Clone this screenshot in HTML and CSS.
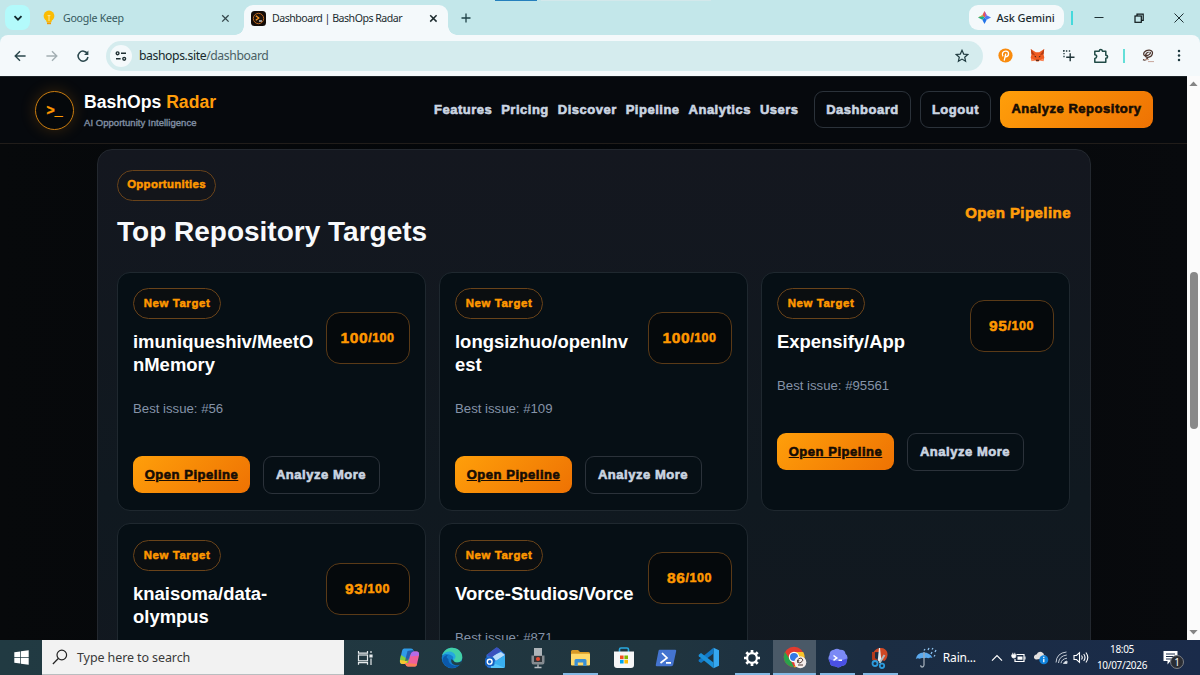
FILE: index.html
```html
<!DOCTYPE html>
<html lang="en">
<head>
    <meta charset="UTF-8">
    <meta name="viewport" content="width=device-width, initial-scale=1.0">
    <title>Dashboard | BashOps Radar</title>
    <link rel="stylesheet" href="styles.css">
</head>
<body>
    <div class="tab-strip">
        <button class="tab-search"><svg width="10" height="10" viewBox="0 0 10 10"><path d="M1.5 3.2 5 6.700l3.500-3.500" fill="none" stroke="#12282c" stroke-width="1.8"/></svg></button>
        <div class="tab">
            <svg width="12" height="16" viewBox="0 0 12 16"><circle cx="6" cy="6" r="5.4" fill="#fbbc04"/><path d="M3.4 9h5.2v3.2H3.4z" fill="#fbbc04"/><path d="M4 12.4h4v1.8H4z" fill="#f29900"/><path d="M6 6v5M4.6 5.6h2.8" stroke="#fff2c2" stroke-width=".8"/></svg>
            <span class="tab-title">Google Keep</span>
            <svg class="tab-close" width="9" height="9" viewBox="0 0 9 9"><path d="m1.2 1.2 6.4 6.4m0-6.4L1.2 7.6" stroke="#35484c" stroke-width="1.3"/></svg>
        </div>
        <div class="tab active">
            <svg width="15" height="15" viewBox="0 0 15 15"><rect width="15" height="15" rx="3.5" fill="#120c08"/><circle cx="7.5" cy="7.5" r="5.2" fill="#1d140d" stroke="#b9651f" stroke-width="1"/><path d="m4.8 4.8 3 2.3-3 2.2" fill="none" stroke="#ff9b21" stroke-width="1.2"/><path d="M8 10h3" stroke="#eee" stroke-width="1.2"/></svg>
            <span class="tab-title">Dashboard | BashOps Radar</span>
            <svg class="tab-close" width="9" height="9" viewBox="0 0 9 9"><path d="m1.2 1.2 6.4 6.4m0-6.4L1.2 7.6" stroke="#1e2c2f" stroke-width="1.5"/></svg>
        </div>
        <svg class="new-tab" width="10" height="10" viewBox="0 0 10 10"><path d="M5 .5v9M.5 5h9" stroke="#1f4147" stroke-width="1.3"/></svg>
        <div class="top-marks"><i></i><i></i></div>
        <button class="gemini">
            <svg width="13" height="13" viewBox="0 0 13 13"><path d="M6.500 0 8.700 4.300 6.500 6.500 4.300 4.300z" fill="#f0574c"/><path d="M8.700 4.300 13 6.500 8.700 8.700 6.500 6.500z" fill="#4a7bf0"/><path d="M8.700 8.700 6.500 13 4.300 8.700l2.200-2.200z" fill="#2374e8"/><path d="M4.300 8.700 0 6.500l4.300-2.200 2.200 2.200z" fill="#1baf88"/><path d="m0 6.500 4.300-2.200 1 1z" fill="#f3b52d"/><path d="m6.500 0 2.200 4.300-1.500 1.500z" fill="#9a58d8"/></svg>
            Ask Gemini
        </button>
        <span class="strip-divider"></span>
        <div class="window-buttons">
            <svg width="12" height="12" viewBox="0 0 12 12"><path d="M1.500 5.500h9" stroke="#1e3034"/></svg>
            <svg width="12" height="12" viewBox="0 0 12 12" fill="none" stroke="#0d1719" stroke-width="1.2"><rect x="2" y="4" width="6.3" height="6.3"/><path d="M4 4V2.2h6.2v6.2H8.3"/></svg>
            <svg width="12" height="12" viewBox="0 0 12 12"><path d="m1.500 1.500 9 9m0-9-9 9" stroke="#1e3034"/></svg>
        </div>
    </div>

    <div class="toolbar">
        <div class="nav-buttons">
            <svg width="14" height="14" viewBox="0 0 14 14" fill="none" stroke="#2a474c" stroke-width="1.4"><path d="M12.600 7H2.400M7 2.200 2.200 7 7 11.800"/></svg>
            <svg width="14" height="14" viewBox="0 0 14 14" fill="none" stroke="#a3afb3" stroke-width="1.4"><path d="M1.400 7h10.200M7 2.200 11.800 7 7 11.800"/></svg>
            <svg width="14" height="14" viewBox="0 0 14 14"><path d="M11.400 4.600A5 5 0 1 0 12 8" fill="none" stroke="#2a474c" stroke-width="1.5"/><path d="M12.400 1.600v4.300H8.100z" fill="#2a474c"/></svg>
        </div>
        <div class="omnibox">
            <span class="site-info"><svg width="12" height="12" viewBox="0 0 12 12" fill="none" stroke="#1f2f32" stroke-width="1.4"><circle cx="2.6" cy="3.3" r="1.4"/><path d="M6 3.300h5M1 8.800h4.600"/><circle cx="9.2" cy="8.8" r="1.4"/></svg></span>
            <span class="url">bashops.site<span>/dashboard</span></span>
            <svg class="star" width="14" height="14" viewBox="0 0 14 14"><path d="m7 1.300 1.700 3.800 4.100.4-3.100 2.700.9 4L7 10.100l-3.600 2.100.9-4L1.200 5.500l4.100-.4z" fill="none" stroke="#1e3a3f" stroke-width="1.2"/></svg>
        </div>
        <div class="extensions">
            <svg width="15" height="15" viewBox="0 0 15 15"><circle cx="7.5" cy="7.5" r="7.1" fill="#f98b0d"/><path d="M6.200 12.600 7.800 5.600M5 8.400C3.200 5.400 5.200 3 8 3.200c3.400.2 3.600 5.300-.6 5.600" fill="none" stroke="#fff" stroke-width="1.3"/></svg>
            <svg width="15" height="15" viewBox="0 0 15 15"><path d="m.8 1 5 3.200h3.400l5-3.200-.7 5.200.8 3.400-1 3.600-3.400-1-1.400 1.200h-2l-1.400-1.200-3.400 1-1-3.600.8-3.400z" fill="#ef5b20"/><path d="m.8 1 4.300 6.200-3.600-1zM14.200 1 9.900 7.200l3.600-1z" fill="#b23c14"/><path d="m4 7.800 2 .4.2 1.500zM11 7.800l-2 .4-.2 1.500zM6 11.800h3v1H6z" fill="#33201a"/><path d="m1.500 10.200 3.600 2-3.400.8zM13.500 10.200l-3.600 2 3.400.8z" fill="#ff8d5d"/></svg>
            <svg width="13" height="13" viewBox="0 0 13 13"><path d="M1 2h8M2 1v8" fill="none" stroke="#21363a" stroke-width="1.3" stroke-dasharray="1.4 1.5"/><path d="M8.200 4.200v8M4.200 8.200h8.300" stroke="#21363a" stroke-width="1.4"/></svg>
            <svg width="16" height="16" viewBox="0 0 16 16"><path d="M1.800 3.200h4.400Q6.400 1.400 7.800 1.400t1.600 1.800h3.400v4q1.800 0 1.800 1.500t-1.800 1.500v4h-11v-3.800q1.900-.2 1.900-1.900t-1.900-1.800z" fill="none" stroke="#204b46" stroke-width="1.5" stroke-linejoin="round"/></svg>
            <span class="ext-divider"></span>
            <svg width="14" height="14" viewBox="0 0 14 14" fill="none" stroke="#4b342c"><path d="M4 7C.8 5 4 .9 8.300 1.100 13.500 1.400 11.800 8 7 8.300 3 8.600 4.200 4 7.600 3.200m1 0C11 3.800 7 7.400 5 6.200M7 8.400Q5 12 2 10.600" stroke-width="1.3"/><path d="M3 10.600h5M7 12.600h6" stroke="#c7a69b"/></svg>
            <svg width="4" height="13" viewBox="0 0 4 13" fill="#1f3b40"><circle cx="2" cy="2" r="1.25"/><circle cx="2" cy="6.5" r="1.25"/><circle cx="2" cy="11" r="1.25"/></svg>
        </div>
    </div>

    <div class="viewport">
        <div class="page">
            <header class="site-header">
                <div class="logo">&gt;_</div>
                <div class="brand">
                    <strong>BashOps <span>Radar</span></strong>
                    <small>AI Opportunity Intelligence</small>
                </div>
                <nav class="site-nav">
                    <a>Features</a>
                    <a>Pricing</a>
                    <a>Discover</a>
                    <a>Pipeline</a>
                    <a>Analytics</a>
                    <a>Users</a>
                </nav>
                <a class="btn btn-outline btn-dashboard">Dashboard</a>
                <a class="btn btn-outline btn-logout">Logout</a>
                <a class="btn btn-primary btn-analyze">Analyze Repository</a>
            </header>

            <section class="panel">
                <div class="panel-head">
                    <div>
                        <span class="chip chip-wide">Opportunities</span>
                        <h2>Top Repository Targets</h2>
                    </div>
                    <a class="panel-link">Open Pipeline</a>
                </div>
                <div class="cards">
                    <article class="card">
                        <div class="card-head">
                            <div class="card-title">
                                <span class="chip">New Target</span>
                                <h3>imuniqueshiv/MeetOnMemory</h3>
                            </div>
                            <div class="score">100<small>/100</small></div>
                        </div>
                        <p>Best issue: #56</p>
                        <div class="card-actions">
                            <a class="btn btn-primary">Open Pipeline</a>
                            <a class="btn btn-outline">Analyze More</a>
                        </div>
                    </article>
                    <article class="card">
                        <div class="card-head">
                            <div class="card-title">
                                <span class="chip">New Target</span>
                                <h3>longsizhuo/openInvest</h3>
                            </div>
                            <div class="score">100<small>/100</small></div>
                        </div>
                        <p>Best issue: #109</p>
                        <div class="card-actions">
                            <a class="btn btn-primary">Open Pipeline</a>
                            <a class="btn btn-outline">Analyze More</a>
                        </div>
                    </article>
                    <article class="card">
                        <div class="card-head">
                            <div class="card-title">
                                <span class="chip">New Target</span>
                                <h3>Expensify/App</h3>
                            </div>
                            <div class="score">95<small>/100</small></div>
                        </div>
                        <p>Best issue: #95561</p>
                        <div class="card-actions">
                            <a class="btn btn-primary">Open Pipeline</a>
                            <a class="btn btn-outline">Analyze More</a>
                        </div>
                    </article>
                    <article class="card">
                        <div class="card-head">
                            <div class="card-title">
                                <span class="chip">New Target</span>
                                <h3>knaisoma/data-olympus</h3>
                            </div>
                            <div class="score">93<small>/100</small></div>
                        </div>
                    </article>
                    <article class="card">
                        <div class="card-head">
                            <div class="card-title">
                                <span class="chip">New Target</span>
                                <h3>Vorce-Studios/Vorce</h3>
                            </div>
                            <div class="score">86<small>/100</small></div>
                        </div>
                        <p>Best issue: #871</p>
                    </article>
                </div>
            </section>
        </div>
        <div class="scrollbar">
            <svg width="9" height="6" viewBox="0 0 9 6"><path d="M4.500.6 8.600 5H.4z" fill="#858585"/></svg>
            <div class="track"><div class="thumb"></div></div>
            <svg width="9" height="6" viewBox="0 0 9 6"><path d="M4.500 5.400.4 1h8.200z" fill="#858585"/></svg>
        </div>
    </div>

    <footer class="taskbar">
        <div class="start"><svg width="15" height="15" viewBox="0 0 15 15" fill="#fff"><path d="M.3 2.300 6.200 1.400v5.700H.3zM6.900 1.300 14.700.2v6.900H6.900zM.3 7.800h5.900v5.800L.3 12.800zM6.900 7.800h7.800v7L6.900 13.700z"/></svg></div>
        <div class="search">
            <svg width="16" height="16" viewBox="0 0 16 16" fill="none" stroke="#222" stroke-width="1.2"><circle cx="9.8" cy="6" r="4.8"/><path d="M6.300 9.500.9 15"/></svg>
            Type here to search
        </div>
        <div class="app task-view"><svg width="16" height="16" viewBox="0 0 16 16" fill="none" stroke="#e5eaec" stroke-width="1.2"><path d="M1.500 1v2.200h9V1M1.500 14.800v-2.200h9v2.200"/><rect x="1.5" y="5" width="9" height="5.8"/><path d="M14 1v2M14 8.500V15"/><path d="M13 5h2v2h-2z" fill="#fff"/></svg></div>
        <div class="app"><svg width="21" height="21" viewBox="0 0 21 21"><path d="M5 1.500h7q2 0 2.500 2l.5 2h-3L9.500 15q-.5 2-2.500 2H3.500Q.5 17 1 13L3 4q.5-2.500 2-2.500z" fill="#2f9be8"/><path d="M2 8 .9 13q-.4 4 2.600 4H7q2 0 2.500-2l.6-2z" fill="#7fd03c"/><path d="M1 13q-.3 4 2.500 4H7l1-3z" fill="#f6c730"/><path d="M16 19.500H9q-2 0-2.500-2L6 16h3l2.500-9q.5-2.500 3-2.500h3q3 0 2.500 4L18 17q-.5 2.500-2 2.500z" fill="#f0609a"/><path d="M20 8.500q.5-4-2.500-4h-3q-2 0-2.500 2l-.8 3z" fill="#b46be8"/><path d="m7 16-.8.5Q7 19.500 9 19.500h7q1.500 0 2-2.500z" fill="#fb8155"/><path d="m8.500 4 5.500-1 .5 1.500q-2 .3-2.700 2L9 13.500 6 14z" fill="#1c3d91" opacity=".65"/></svg></div>
        <div class="app"><svg width="22" height="22" viewBox="0 0 22 22"><circle cx="11" cy="11" r="10.3" fill="#147dce"/><path d="M1 8.500C3 3 7 .7 11 .7c6 0 10.300 4.300 10.300 9.300 0 3.800-2.800 5.600-5.400 5.600-3 0-4-1.400-3.200-2.500C14.200 9.500 11.500 6.800 8 6.500 5 6.300 2.500 7 1 8.500z" fill="#42d0a6"/><path d="M1 8.500C5 3 13 3 14.500 9c.4 2.600-2 3.200-1.700 5-1-.8-1.200-2.300-.5-3.800C11 7 3.500 5.500 1 8.500z" fill="#25a9df"/><path d="M7.400 12c-.4 5 5.400 8 11 6.300C13.500 23 4.500 21.500 2 15 .8 11.500 3.500 8 7 8q-3 2 .4 4z" fill="#0b59aa"/><path d="M12.800 14c1.500 2.200 5 1.900 7.200.6l1.500-.6-1.500 3-1.500 1C13 19.500 9 16 10.500 12z" fill="#20404a"/></svg></div>
        <div class="app"><svg width="22" height="22" viewBox="0 0 22 22"><path d="M2.500 8 12 .8q1-.5 2 .2L21 7v12q0 2-2 2H6q-3.500 0-3.500-3z" fill="#2a73d5"/><path d="m8 9 9-4 4 3-9 6z" fill="#b9dcfb"/><path d="M2.500 8 12 .8q1-.5 2 .2l3 2.500-9.500 7z" fill="#3c51bd"/><path d="M21 8 7 17v2.500L19 21q2 0 2-2z" fill="#39aff0"/><path d="m7 15 14 6H7z" fill="#55c5fa"/><rect x="1" y="10.500" width="9.5" height="8.5" rx="2" fill="#1460bf"/><circle cx="5.7" cy="14.7" r="2.4" fill="none" stroke="#fff" stroke-width="1.4"/></svg></div>
        <div class="app"><svg width="16" height="22" viewBox="0 0 16 22"><path d="M4 1h8v8H4z" fill="#aeb4b8"/><path d="M1.500 8.500h13V15q0 2.500-2 2.500h-9q-2 0-2-2.500z" fill="#858b90"/><path d="M4 9h8v6H4z" fill="#313539"/><circle cx="8" cy="12" r="2.1" fill="#e24b31"/><path d="M8 17.500V20M4.500 20.500h7" stroke="#b7bdc1" stroke-width="1.3"/></svg></div>
        <div class="app open"><svg width="21" height="18" viewBox="0 0 21 18"><path d="M1 2.500Q1 1 2.500 1H8l2 2h8.500Q20 3 20 4.500V16H1z" fill="#d99a26"/><rect x="1" y="4.8" width="19" height="11.7" rx="1" fill="#ffd96b"/><path d="M4.500 17v-5.500q0-1.500 1.500-1.500h9q1.500 0 1.500 1.500V17h-3.300v-3.500H7.800V17z" fill="#3b8fd3"/></svg></div>
        <div class="app"><svg width="22" height="22" viewBox="0 0 22 22"><path d="M6.500 5V2.500Q6.500 1 8 1h6q1.500 0 1.500 1.500V5" fill="none" stroke="#29a9df" stroke-width="1.6"/><path d="M1 4.500h20V18q0 3-3 3H4q-3 0-3-3z" fill="#f6f6f7"/><path d="M7 8.500h3.600v3.600H7z" fill="#f25022"/><path d="M11.400 8.500H15v3.600h-3.600z" fill="#7fba00"/><path d="M7 12.900h3.600v3.600H7z" fill="#00a4ef"/><path d="M11.400 12.900H15v3.600h-3.600z" fill="#ffb900"/></svg></div>
        <div class="app"><svg width="22" height="18" viewBox="0 0 22 18"><path d="M4.700.8H20q1.500 0 1.200 1.300l-3 13.700q-.3 1.400-1.800 1.400H2Q.4 17.200.8 15.700L3.500 2q.2-1.200 1.200-1.200z" fill="#4474d0"/><path d="m7 4 5 5-6.500 5M11 13.800h5" fill="none" stroke="#fff" stroke-width="1.7"/></svg></div>
        <div class="app"><svg width="22" height="22" viewBox="0 0 22 22"><path d="M15.500.8 21 3.300v15.400l-5.500 2.500z" fill="#35a7f0"/><path d="M15.500.8v5.700L3 16 .8 14.300q-.5-.8 0-1.500z" fill="#1278c5"/><path d="m.8 7.700 2.200-1.700 12.500 9.500v5.700L.8 9.200q-.4-.8 0-1.500z" fill="#1b91da"/></svg></div>
        <div class="app open"><svg width="18" height="18" viewBox="0 0 18 18"><circle cx="9" cy="9" r="4.9" fill="none" stroke="#fff" stroke-width="2.2"/><g stroke="#fff" stroke-width="2.7"><path d="M9 1v3M9 14v3M1 9h3M14 9h3M3.300 3.300l2.200 2.200M12.500 12.500l2.200 2.200M14.700 3.300l-2.200 2.200M5.500 12.500l-2.200 2.200"/></g></svg></div>
        <div class="app open focused"><svg width="24" height="23" viewBox="0 0 24 23"><circle cx="11" cy="11" r="10.3" fill="#e33b2e"/><path d="M2 6 8 15l3 6.200A10.300 10.300 0 0 1 2 6z" fill="#2aa24c"/><path d="M20.200 6H11l5.500 8-5.500 7.300A10.300 10.300 0 0 0 20.200 6z" fill="#f9c52b"/><circle cx="11" cy="11" r="5.2" fill="#fff"/><circle cx="11" cy="11" r="4" fill="#3479e5"/><circle cx="17.3" cy="16.2" r="6" fill="#f5eeec"/><path d="M15 17q-2-4 3-5 4 2-1 5-3 0-1-3M15 19h5" fill="none" stroke="#4e3935"/></svg></div>
        <div class="app open"><svg width="20" height="20" viewBox="0 0 20 20"><path d="M6 1.700Q9-.3 12 1.800q5-.4 5.500 4 3.500 3 1 7 .2 4.600-4.500 5-3.500 3-7 .5-4.700.4-5.200-4.300Q-.8 10.500 1.500 7 1.500 2.300 6 1.700z" fill="#7b8af5"/><path d="M1 11q8 4 18-.5 0 7-5 7.300-3.500 3-7 .5-5 .2-5.200-4.300-.8-1-.8-3z" fill="#4a50e4"/><path d="m5.500 7.500 3.300 2.400-3.300 2.400M10.500 12.200H14" fill="none" stroke="#fff" stroke-width="1.5"/></svg></div>
        <div class="app open"><svg width="20" height="22" viewBox="0 0 20 22"><path d="M9.500 1C18 0 20 9 14.500 14L10 12.500V5L3.500 5.300Q6 1.300 9.500 1z" fill="#cf4824"/><path d="M3.500 5v7L7 14" fill="none" stroke="#b23a1d" stroke-width="3"/><path d="m9 1-1.200 12L10 16l1.300-3L10 1z" fill="#e7edf0"/><path d="m14.500 8-5 8" stroke="#aeb9be" stroke-width="2"/><circle cx="5" cy="16.5" r="2.5" fill="none" stroke="#2c9cdd" stroke-width="1.8"/><circle cx="12" cy="18.8" r="2.2" fill="none" stroke="#2c9cdd" stroke-width="1.8"/></svg></div>
        <div class="weather">
            <svg width="22" height="21" viewBox="0 0 22 21"><path d="M.8 12Q2 5.500 8.500 5.500T17.500 11q-2-1-4 .3-2.200-1.200-4.500 0-2.300-1-4.300.5Q2.700 10.700.8 12z" fill="#5aa9ee"/><path d="M9 5v13q-.2 2-1.800 2-1.500 0-1.500-1.800" fill="none" stroke="#9ea9b4" stroke-width="1.3"/><path d="m10 2-1 1.500M14 1l-1 2M18 1l-1 1.500M17 5l-1 2M21 3l-1 2M20 8l-1 1.500" stroke="#8fc4f0" stroke-width="1.3"/></svg>
            <span>Rain...</span>
        </div>
        <div class="tray">
            <svg width="12" height="8" viewBox="0 0 12 8"><path d="M1 6.700 6 1.700l5 5" fill="none" stroke="#fff" stroke-width="1.2"/></svg>
            <svg class="battery" width="15" height="12" viewBox="0 0 15 12"><path d="M5.500 2.500H13v7H4V7" fill="none" stroke="#fff" stroke-width="1.2"/><path d="M6.500 4.500h5v3.200h-5zM13.500 4.500h1v3h-1z" fill="#fff"/><path d="M.8 2.800h4v1.500Q4.800 6 2.800 6T.8 4.300zM1.800.8v2M3.800.8v2" fill="#fff" stroke="#fff" stroke-width=".9"/></svg>
            <svg class="cloud" width="16" height="15" viewBox="0 0 16 15"><path d="M3.500 9.500Q.5 9 1 6.500q.5-2 2.500-2Q5 1 8.500 2q2.500.8 2.500 3 2.500.5 2 3z" fill="#e3e0df"/><circle cx="10.8" cy="9.7" r="4.5" fill="#0f82dc"/><path d="M10.800 8.800v3.400M10.800 6.800V8" stroke="#fff" stroke-width="1.3"/></svg>
            <svg class="wifi" width="13" height="13" viewBox="0 0 13 13" fill="none" stroke="#c5ccd6"><path d="M1 11.500Q1.500 2 11.500 1M3.500 12Q4 5 11.800 4M6 12.200Q6.500 8 12 7.200"/><path d="M8.500 12.500q.5-2 3.500-2.500v2.500z" fill="#e9edf2"/></svg>
            <svg class="speaker" width="16" height="13" viewBox="0 0 16 13" fill="none" stroke="#fff" stroke-width="1.1"><path d="M1 4.500h2.500l3-2.800v9.600l-3-2.800H1zM8.500 4.500q1.500 2 0 4M10.700 3q2.600 3.500 0 7M12.900 1.500q3.800 5 0 10"/></svg>
            <div class="clock"><span>18:05</span><span>10/07/2026</span></div>
            <div class="notifications">
                <svg width="15" height="15" viewBox="0 0 15 15"><path d="M.5 1h14v10h-7l-3 3.500V11h-4z" fill="#fff"/><path d="M3 4h9M3 6.500h9M3 9h5" stroke="#1b2d4a"/></svg>
                <span class="count">1</span>
            </div>
        </div>
    </footer>
</body>
</html>
```

FILE: styles.css
```css
* {
    box-sizing: border-box;
}

body {
    margin: 0;
    width: 1200px;
    height: 675px;
    overflow: hidden;
    display: flex;
    flex-direction: column;
    font-family: "Liberation Sans", Arial, sans-serif;
    background: #c3e7ea;
}

svg {
    display: block;
    flex: none;
}

button {
    border: none;
    padding: 0;
    font: inherit;
}

/* browser tabs */
.tab-strip {
    position: relative;
    height: 35px;
    flex: none;
    display: flex;
    align-items: center;
    font-family: "Noto Sans", sans-serif;
    font-size: 10.6px;
    color: #35595e;
}

.tab-search {
    width: 25px;
    height: 25px;
    margin-left: 5px;
    display: flex;
    align-items: center;
    justify-content: center;
    border-radius: 8px;
    background: #b3fafb;
}

.tab {
    width: 214px;
    height: 30px;
    align-self: flex-end;
    display: flex;
    align-items: center;
    padding: 0 14px 4px 13px;
}

.tab .tab-title {
    margin-left: 8px;
    white-space: nowrap;
    letter-spacing: -0.25px;
}

.tab-close {
    margin-left: auto;
}

.tab.active {
    position: relative;
    width: 204px;
    padding: 0 10px 4px 7px;
    color: #1c2c30;
    background: #f4f9fb;
    border-radius: 9px 9px 0 0;
}

.tab.active .tab-title {
    margin-left: 6px;
    letter-spacing: -0.5px;
}

.tab.active::before,
.tab.active::after {
    content: "";
    position: absolute;
    bottom: 0;
    width: 9px;
    height: 9px;
}

.tab.active::before {
    left: -9px;
    background: radial-gradient(circle at 0 0, transparent 8.5px, #f4f9fb 9px);
}

.tab.active::after {
    right: -9px;
    background: radial-gradient(circle at 100% 0, transparent 8.5px, #f4f9fb 9px);
}

.new-tab {
    margin-left: 13px;
}

.top-marks {
    display: flex;
    gap: 4px;
    align-self: flex-start;
    margin-left: 24px;
}

.top-marks i {
    width: 42px;
    height: 1px;
    background: #2580bd;
}

.top-marks i + i {
    width: 170px;
    background: #d3e8eb;
}

.gemini {
    width: 95px;
    height: 25px;
    margin-left: auto;
    display: flex;
    align-items: center;
    justify-content: center;
    gap: 5px;
    border-radius: 9px;
    background: #f4f9fb;
    color: #1c2c30;
    font-weight: 500;
    font-size: 11px;
    letter-spacing: -0.1px;
    white-space: nowrap;
}

.strip-divider {
    width: 2px;
    height: 14px;
    margin-left: 7px;
    background: #45d9dc;
}

.window-buttons {
    display: flex;
    gap: 28px;
    margin: 0 15px 0 20px;
}

/* address bar */
.toolbar {
    height: 41px;
    flex: none;
    display: flex;
    align-items: center;
    background: #f4f9fb;
    border-radius: 8px 8px 0 0;
}

.nav-buttons {
    width: 106px;
    display: flex;
    gap: 17.5px;
    padding-left: 13px;
}

.omnibox {
    width: 877px;
    height: 30px;
    display: flex;
    align-items: center;
    padding: 0 14px 0 4px;
    border-radius: 15px;
    background: #d5ecee;
    font-family: "Noto Sans", sans-serif;
    font-size: 12.2px;
    color: #16282b;
}

.site-info {
    width: 22px;
    height: 22px;
    display: flex;
    align-items: center;
    justify-content: center;
    border-radius: 50%;
    background: #f4f9fb;
}

.url {
    margin-left: 7px;
    letter-spacing: -0.4px;
}

.url span {
    color: #4a6064;
}

.star {
    margin-left: auto;
}

.extensions {
    display: flex;
    align-items: center;
    padding-left: 15px;
}

.extensions > :nth-child(2) {
    margin-left: 17px;
}

.extensions > :nth-child(3) {
    margin-left: 17px;
}

.extensions > :nth-child(4) {
    margin-left: 18px;
}

.ext-divider {
    width: 1.5px;
    height: 14px;
    margin-left: 14px;
    background: #63dfd8;
}

.ext-divider + svg {
    margin-left: 16px;
}

.extensions > :last-child {
    margin-left: 22px;
}

/* page */
.viewport {
    height: 564px;
    flex: none;
    display: flex;
    overflow: hidden;
}

.page {
    width: 1187px;
    height: 564px;
    overflow: hidden;
    background: linear-gradient(90deg, #07090b, #030609 50%, #080a0d);
}

.site-header {
    height: 68px;
    display: flex;
    align-items: center;
    padding: 0 34px 0 35px;
    border-bottom: 1px solid #211d1a;
    border-top: 1px solid #1b2226;
    background: #06090d;
}

.logo {
    width: 39px;
    height: 39px;
    display: flex;
    align-items: center;
    justify-content: center;
    border: 1px solid #c97c10;
    border-radius: 50%;
    background: #05080b;
    color: #ff9800;
    font-weight: bold;
    font-size: 14px;
    -webkit-text-stroke: 0.4px;
    box-shadow: 0 0 16px rgba(255, 145, 0, 0.2);
}

.brand {
    width: 350px;
    margin-left: 10px;
    display: flex;
    flex-direction: column;
    gap: 4px;
}

.brand strong {
    color: #fff;
    font-size: 17.6px;
    line-height: 20px;
}

.brand strong span {
    color: #ff9d0a;
}

.brand small {
    color: #7f8da1;
    font-size: 9.5px;
    font-weight: normal;
    line-height: 13px;
    letter-spacing: 0.04px;
    -webkit-text-stroke: 0.4px #7f8da1;
}

.site-nav {
    display: flex;
    gap: 9px;
    padding-bottom: 1px;
    color: #cbd5e1;
    font-size: 13px;
    font-weight: bold;
    letter-spacing: 0.5px;
    -webkit-text-stroke: 0.6px;
}

.btn {
    width: 117px;
    height: 37px;
    display: flex;
    align-items: center;
    justify-content: center;
    border-radius: 9px;
    font-size: 13px;
    font-weight: bold;
    letter-spacing: 0.53px;
    white-space: nowrap;
    -webkit-text-stroke: 0.6px;
}

.btn-outline {
    height: 38px;
    border: 1px solid #2b323a;
    color: #cbd5e1;
}

.btn-primary {
    background: linear-gradient(135deg, #ff9f0a, #ee7203);
    color: #160c04;
}

.card-actions .btn-primary {
    text-decoration: underline;
}

.site-header .btn {
    height: 37px;
    margin: 0 0 1px 9px;
    padding-bottom: 1px;
}

.site-header .btn-dashboard {
    width: 97px;
    margin-left: auto;
}

.site-header .btn-logout {
    width: 71px;
}

.site-header .btn-analyze {
    width: 153px;
    padding-bottom: 3px;
}

.panel {
    width: 994px;
    height: 700px;
    margin: 5px 0 0 97px;
    padding: 20px 19px;
    border: 1px solid #23282f;
    border-radius: 15px;
    background: linear-gradient(180deg, #14171f, #101920 50%, #14171f);
}

.panel-head {
    display: flex;
    justify-content: space-between;
    align-items: center;
    height: 101.5px;
    padding-bottom: 16px;
}

.panel-head h2 {
    margin: 14px 0 0;
    padding-bottom: 7px;
    color: #f8fafc;
    font-size: 28px;
    line-height: 34px;
    white-space: nowrap;
}

.panel-link {
    color: #ff9d0a;
    font-size: 15px;
    font-weight: bold;
    letter-spacing: 0.45px;
    -webkit-text-stroke: 0.6px;
}

.chip {
    width: 88px;
    height: 31px;
    display: flex;
    align-items: center;
    justify-content: center;
    padding-bottom: 1px;
    border: 1px solid #69431a;
    border-radius: 16px;
    background: #0b0e10;
    color: #ff9800;
    font-size: 11.4px;
    font-weight: bold;
    letter-spacing: 0.6px;
    white-space: nowrap;
    -webkit-text-stroke: 0.5px;
}

.chip-wide {
    width: 99px;
    padding-bottom: 2px;
    background: #13151a;
    letter-spacing: 0.3px;
}

.cards {
    display: grid;
    grid-template-columns: repeat(3, 309px);
    grid-auto-rows: 239px;
    gap: 12.5px 13px;
}

.card {
    padding: 15.5px 15.5px 15.5px 15px;
    border: 1px solid #1f282f;
    border-radius: 13px;
    background: #060f15;
}

.card-head {
    display: flex;
    justify-content: space-between;
    align-items: center;
}

.card-title {
    width: 181.5px;
    padding-bottom: 11px;
}

.card-title h3 {
    margin: 11px 0 0;
    color: #fff;
    font-size: 18.45px;
    line-height: 23px;
    overflow-wrap: anywhere;
}

.score {
    width: 84px;
    height: 52px;
    display: flex;
    align-items: center;
    justify-content: center;
    border: 1px solid #5a3a17;
    border-radius: 14px;
    background: #05090c;
    color: #ff9800;
    font-size: 15.5px;
    font-weight: bold;
    letter-spacing: 0.6px;
    -webkit-text-stroke: 0.5px;
}

.score small {
    font-size: 12.5px;
    letter-spacing: 0.5px;
}

.card p {
    margin: 13px 0 0;
    color: #8593a8;
    font-size: 13.2px;
    line-height: 18px;
}

.card-actions {
    display: flex;
    align-items: center;
    gap: 12.5px;
    margin-top: 37.5px;
}

.scrollbar {
    width: 13px;
    display: flex;
    flex-direction: column;
    align-items: center;
    padding: 5px 0;
    background: #fbfbfb;
}

.track {
    flex: 1;
    padding-top: 185px;
}

.thumb {
    width: 8px;
    height: 157px;
    border-radius: 4px;
    background: #898989;
}

/* taskbar */
.taskbar {
    height: 35px;
    flex: none;
    display: flex;
    align-items: center;
    background: linear-gradient(90deg, #213a42, #20353f 55%, #1b2d42 72%, #1a2b4a);
    color: #fff;
    font-family: "Noto Sans", sans-serif;
}

.start {
    width: 42px;
    padding-left: 14px;
}

.search {
    width: 302px;
    height: 35px;
    display: flex;
    align-items: center;
    gap: 9px;
    padding-left: 10px;
    border-bottom: 1px solid #b9bdbf;
    background: #f2f2f2;
    color: #3a3a3a;
    font-size: 12.5px;
    letter-spacing: -0.1px;
}

.app {
    width: 42.8px;
    height: 35px;
    flex: none;
    display: flex;
    align-items: center;
    justify-content: center;
}

.task-view {
    margin-right: 1.5px;
}

.app.open {
    background: linear-gradient(#84b9e4, #84b9e4) center bottom / 35px 2px no-repeat;
}

.app.focused {
    background: linear-gradient(#84b9e4, #84b9e4) center bottom / 100% 2px no-repeat, #4a5967;
}

.weather {
    display: flex;
    align-items: center;
    gap: 6px;
    margin-left: 13px;
    font-size: 12px;
    letter-spacing: -0.2px;
}

.tray {
    display: flex;
    align-items: center;
    margin-left: auto;
}

.battery {
    margin-left: 8px;
}

.cloud {
    margin-left: 7px;
}

.wifi {
    margin-left: 6px;
}

.speaker {
    margin-left: 5px;
}

.clock {
    width: 56px;
    margin-left: 5px;
    display: flex;
    flex-direction: column;
    align-items: center;
    font-size: 10px;
    line-height: 15.5px;
    letter-spacing: -0.3px;
}

.notifications {
    position: relative;
    margin-left: 13px;
    padding-right: 22px;
}

.count {
    position: absolute;
    left: 7px;
    top: 5px;
    width: 14px;
    height: 14px;
    border: 1px solid #7c8087;
    border-radius: 50%;
    background: #2a2d33;
    font-size: 10px;
    line-height: 12px;
    text-align: center;
}
```
